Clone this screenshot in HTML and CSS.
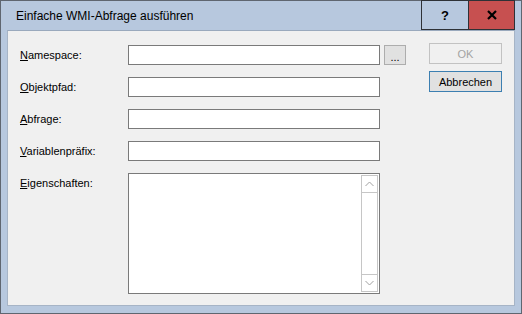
FILE: index.html
```html
<html>

<head>
	<link rel="stylesheet" href="styles.css">
</head>

<body>
	<div class="window">
		<div class="titlebar">
			<span class="title">Einfache WMI-Abfrage ausführen</span>
			<div class="cap-btn help">?</div>
			<div class="cap-btn close">
				<svg width="10" height="10" viewBox="0 0 10 10">
					<path d="M1 1 L9 9 M9 1 L1 9" stroke="#000" stroke-width="2.2" fill="none" />
				</svg>
			</div>
		</div>
		<div class="client">
			<div class="form">
				<label class="lbl"><u>N</u>amespace:</label>
				<input class="field" type="text">
				<button class="browse">...</button>

				<label class="lbl"><u>O</u>bjektpfad:</label>
				<input class="field" type="text">
				<span></span>

				<label class="lbl"><u>A</u>bfrage:</label>
				<input class="field" type="text">
				<span></span>

				<label class="lbl"><u>V</u>ariablenpräfix:</label>
				<input class="field" type="text">
				<span></span>

				<label class="lbl"><u>E</u>igenschaften:</label>
				<div class="memo">
					<div class="memo-text"></div>
					<div class="vscroll">
						<div class="arrow">
							<svg width="9" height="6" viewBox="0 0 9 6"><path d="M0.5 5 L4.5 1 L8.5 5" stroke="#a0a0a0" stroke-width="1" fill="none" /></svg>
						</div>
						<div class="track"></div>
						<div class="arrow">
							<svg width="9" height="6" viewBox="0 0 9 6"><path d="M0.5 1 L4.5 5 L8.5 1" stroke="#a0a0a0" stroke-width="1" fill="none" /></svg>
						</div>
					</div>
				</div>
				<span></span>
			</div>
			<div class="actions">
				<button class="btn ok" disabled>OK</button>
				<button class="btn cancel">Abbrechen</button>
			</div>
		</div>
	</div>
</body>

</html>
```

FILE: styles.css
```css
html, body {
	margin: 0;
	padding: 0;
	background: #b7c8de;
}
/* Outer dialog frame */

.window {
	width: 522px;
	height: 314px;
	box-sizing: border-box;
	border: 1px solid #5f6670;
	background: #b7c8de;
	display: flex;
	flex-direction: column;
	font-family: "Liberation Sans", Arial, sans-serif;
	font-size: 11px;
	color: #000;
}
/* Caption bar */

.titlebar {
	height: 29px;
	display: flex;
	align-items: flex-start;
	padding-right: 6px;
}

.title {
	flex: 1;
	padding-left: 15px;
	padding-top: 8px;
	font-size: 12px;
}

.cap-btn {
	height: 30px;
	margin-top: -1px;
	box-sizing: border-box;
	border: 1px solid #2e3136;
	display: flex;
	align-items: center;
	justify-content: center;
}

.help {
	width: 47px;
	border-right: none;
	font-weight: bold;
	font-size: 13px;
}

.close {
	width: 47px;
	background: #c75050;
}
/* Client area */

.client {
	flex: 1;
	margin: 0 6px 7px 6px;
	border: 1px solid #a6b4c6;
	border-top-color: #9aa9bd;
	background: #f0f0f0;
	display: flex;
	align-items: flex-start;
}

.form {
	display: grid;
	grid-template-columns: 108px 252px 26px;
	grid-auto-rows: 20px;
	row-gap: 12px;
	padding: 14px 0 0 12px;
}

.form .memo {
	height: 121px;
}

.lbl {
	padding-top: 4px;
	white-space: nowrap;
}

.field {
	height: 20px;
	width: 252px;
	margin: 0;
	padding: 0 2px;
	box-sizing: border-box;
	border: 1px solid #7a7a7a;
	background: #fff;
	outline: none;
}

.browse {
	width: 22px;
	height: 20px;
	margin: 0 0 0 4px;
	padding: 5px 0 0 0;
	box-sizing: border-box;
	border: 1px solid #adadad;
	background: #e1e1e1;
	font-family: "Liberation Sans", Arial, sans-serif;
	font-size: 11px;
	line-height: 11px;
	color: #000;
}
/* Multi-line box with a disabled scrollbar */

.memo {
	box-sizing: border-box;
	border: 1px solid #7a7a7a;
	background: #fff;
	display: flex;
	padding: 1px 1px 1px 0;
}

.memo-text {
	flex: 1;
}

.vscroll {
	width: 17px;
	box-sizing: border-box;
	border: 1px solid #c6c6c6;
	display: flex;
	flex-direction: column;
}

.arrow {
	height: 16px;
	display: flex;
	align-items: center;
	justify-content: center;
}

.vscroll .arrow:first-child {
	border-bottom: 1px solid #c6c6c6;
}

.vscroll .arrow:last-child {
	border-top: 1px solid #c6c6c6;
}

.track {
	flex: 1;
}
/* Dialog buttons */

.actions {
	display: flex;
	flex-direction: column;
	gap: 7px;
	padding-top: 12px;
	margin-left: 23px;
}

.btn {
	width: 73px;
	height: 21px;
	margin: 0;
	padding: 0;
	box-sizing: border-box;
	font-family: "Liberation Sans", Arial, sans-serif;
	font-size: 11px;
	background: #e1e1e1;
	border: 1px solid #adadad;
	color: #000;
}

.ok {
	background: #f0f0f0;
	border-color: #c2c2c2;
	color: #a3a3a3;
}

.cancel {
	border-color: #3c7fb1;
}
```
